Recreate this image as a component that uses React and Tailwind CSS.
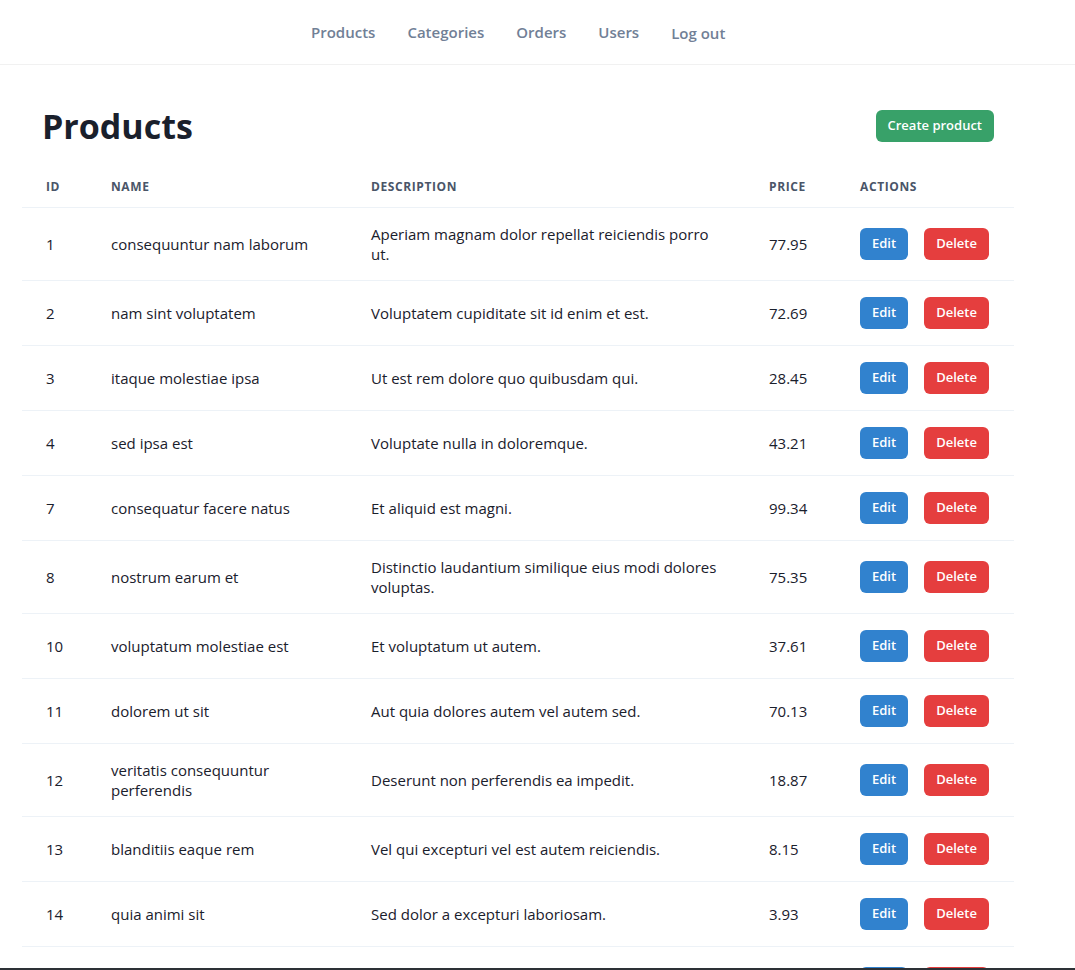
import React from 'react';

const NAV_LINKS = ['Products', 'Categories', 'Orders', 'Users'];

const PRODUCTS = [
  { id: 1, name: 'consequuntur nam laborum', description: 'Aperiam magnam dolor repellat reiciendis porro ut.', price: '77.95' },
  { id: 2, name: 'nam sint voluptatem', description: 'Voluptatem cupiditate sit id enim et est.', price: '72.69' },
  { id: 3, name: 'itaque molestiae ipsa', description: 'Ut est rem dolore quo quibusdam qui.', price: '28.45' },
  { id: 4, name: 'sed ipsa est', description: 'Voluptate nulla in doloremque.', price: '43.21' },
  { id: 7, name: 'consequatur facere natus', description: 'Et aliquid est magni.', price: '99.34' },
  { id: 8, name: 'nostrum earum et', description: 'Distinctio laudantium similique eius modi dolores voluptas.', price: '75.35' },
  { id: 10, name: 'voluptatum molestiae est', description: 'Et voluptatum ut autem.', price: '37.61' },
  { id: 11, name: 'dolorem ut sit', description: 'Aut quia dolores autem vel autem sed.', price: '70.13' },
  { id: 12, name: 'veritatis consequuntur perferendis', description: 'Deserunt non perferendis ea impedit.', price: '18.87' },
  { id: 13, name: 'blanditiis eaque rem', description: 'Vel qui excepturi vel est autem reiciendis.', price: '8.15' },
  { id: 14, name: 'quia animi sit', description: 'Sed dolor a excepturi laboriosam.', price: '3.93' },
  { id: 15, name: 'et iusto dolores', description: 'Ut magnam nulla molestiae sint fugiat doloribus dolor quia eum.', price: '52.40' },
];

const Navbar = () => (
  <nav className="h-[65px] border-b border-[#f1f1f1] flex items-center pl-[311px] gap-8">
    {NAV_LINKS.map(l => (
      <a key={l} className="text-[15px] font-semibold text-[#718096]">{l}</a>
    ))}
    <button className="text-[15px] font-semibold text-[#718096] mt-[2px]">Log out</button>
  </nav>
);

const Btn = ({ color, children }) => (
  <button className={`h-8 px-3 rounded-md text-[13px] font-semibold text-white ${color}`}>
    {children}
  </button>
);

export default function App() {
  return (
    <div className="min-h-screen bg-white text-[#1a202c]" style={{ fontFamily: '"Open Sans", "Noto Sans", sans-serif' }}>
      <Navbar />

      <main className="ml-[22px] w-[992px]">
        <div className="flex items-center justify-between px-5 mt-[39px] h-[44px]">
          <h1 className="text-[34px] font-bold leading-[1.2] text-[#1a202c]">Products</h1>
          <Btn color="bg-[#38a169]">Create product</Btn>
        </div>

        <table className="w-full mt-[19px] table-fixed border-collapse">
          <colgroup>
            <col className="w-[65px]" />
            <col className="w-[260px]" />
            <col className="w-[398px]" />
            <col className="w-[91px]" />
            <col className="w-[178px]" />
          </colgroup>
          <thead>
            <tr className="border-b border-[#edf2f7]">
              {['ID', 'Name', 'Description', 'Price', 'Actions'].map(h => (
                <th key={h} className="px-6 py-3 text-left text-xs font-bold uppercase tracking-wider leading-4 text-[#4a5568]">
                  {h}
                </th>
              ))}
            </tr>
          </thead>
          <tbody>
            {PRODUCTS.map(p => (
              <tr key={p.id} className="border-b border-[#edf2f7]">
                <td className="px-6 py-4 text-[15px] leading-5">{p.id}</td>
                <td className="px-6 py-4 text-[15px] leading-5">{p.name}</td>
                <td className="px-6 py-4 text-[15px] leading-5">{p.description}</td>
                <td className="px-6 py-4 text-[15px] leading-5">{p.price}</td>
                <td className="px-6 py-4">
                  <div className="flex gap-4">
                    <Btn color="bg-[#3182ce]">Edit</Btn>
                    <Btn color="bg-[#e53e3e]">Delete</Btn>
                  </div>
                </td>
              </tr>
            ))}
          </tbody>
        </table>
      </main>

      <div className="fixed bottom-0 left-0 right-0 h-[2px] bg-[#2d3136]" />
    </div>
  );
}
